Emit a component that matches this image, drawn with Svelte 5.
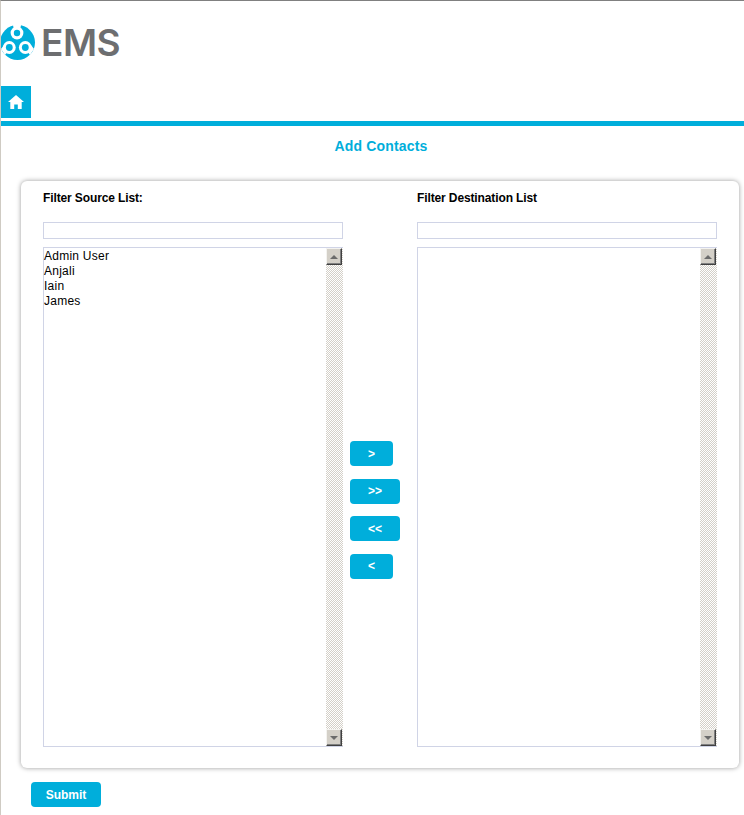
<script>
	const moveButtons = [
		{ label: '>', wide: false },
		{ label: '>>', wide: true },
		{ label: '<<', wide: true },
		{ label: '<', wide: false }
	];
	const source = ['Admin User', 'Anjali', 'Iain', 'James'];
	const lists = [
		{ title: 'Filter Source List:', items: source },
		{ title: 'Filter Destination List', items: [] }
	];
</script>

{#snippet column(list)}
	<div class="column">
		<div class="col-title">{list.title}</div>
		<input class="filter" type="text" />
		<div class="listbox">
			<div class="options">
				{#each list.items as item}
					<div>{item}</div>
				{/each}
			</div>
			<div class="scrollbar">
				<div class="arrow up"><i></i></div>
				<div class="arrow down"><i></i></div>
			</div>
		</div>
	</div>
{/snippet}

<div class="page">
	<header class="logo">
		<svg width="36" height="36" viewBox="0 0 36 36" aria-hidden="true">
			<circle cx="17.5" cy="17.5" r="17.5" fill="#00aedb" />
			<path d="M13 0 L21 0 L20 5 L14 5 Z" fill="#fff" />
			<path d="M1 24 L5 30 L8 26 L4 20 Z" fill="#fff" />
			<path d="M34 24 L30 30 L27 26 L31 20 Z" fill="#fff" />
			<circle cx="17" cy="8" r="6.4" fill="#fff" />
			<circle cx="17" cy="8" r="3.2" fill="#00aedb" />
			<circle cx="9.3" cy="22.5" r="6.4" fill="#fff" />
			<circle cx="9.3" cy="22.5" r="3.4" fill="#00aedb" />
			<circle cx="25.3" cy="22.5" r="6.4" fill="#fff" />
			<circle cx="25.3" cy="22.5" r="3.4" fill="#00aedb" />
		</svg>
		<span class="brand">EMS</span>
	</header>

	<nav class="nav">
		<a class="home" href="#home" aria-label="Home">
			<svg width="16" height="14" viewBox="0 0 16 14" aria-hidden="true">
				<path fill="#fff" d="M8 0 L16 7 L13.7 7 L13.7 14 L9.8 14 L9.8 9.5 L6.2 9.5 L6.2 14 L2.3 14 L2.3 7 L0 7 Z" />
			</svg>
		</a>
	</nav>

	<h1>Add Contacts</h1>

	<section class="card">
		{@render column(lists[0])}
		<div class="moves">
			{#each moveButtons as b}
				<button class="btn" class:wide={b.wide}>{b.label}</button>
			{/each}
		</div>
		{@render column(lists[1])}
	</section>

	<button class="btn submit">Submit</button>
</div>

<style>
	:global(body) {
		margin: 0;
		background: #fff;
		font-family: 'Liberation Sans', Arial, sans-serif;
	}

	.page {
		height: 814px;
		overflow: hidden;
		border-top: 1px solid #808080;
		border-left: 1px solid #cfcbc3;
	}

	.logo {
		display: flex;
		align-items: center;
		gap: 5px;
		height: 36px;
		margin: 24px 0 0 -1px;
	}

	.brand {
		font-family: Inter, Lato, sans-serif;
		font-weight: 600;
		font-size: 37px;
		line-height: 36px;
		letter-spacing: -0.5px;
		color: #6d6e70;
	}

	.nav {
		margin-top: 25px;
		border-bottom: 5px solid #00aedb;
		height: 35px;
	}

	.home {
		display: flex;
		align-items: center;
		justify-content: center;
		width: 30px;
		height: 32px;
		background: #00aedb;
	}

	h1 {
		margin: 12px 0 0;
		padding-left: 17px;
		text-align: center;
		font-size: 14px;
		line-height: 16px;
		font-weight: 700;
		letter-spacing: 0.15px;
		color: #00aedb;
	}

	.card {
		display: flex;
		box-sizing: border-box;
		width: 718px;
		height: 587px;
		margin: 27px 0 0 20px;
		padding: 9px 22px 0;
		background: #fff;
		border-radius: 6px;
		box-shadow: 0 0 5px rgba(0, 0, 0, 0.4);
	}

	.column {
		display: flex;
		flex-direction: column;
		width: 300px;
	}

	.col-title {
		font-size: 12px;
		line-height: 16px;
		font-weight: 700;
		letter-spacing: -0.12px;
		color: #000;
	}

	.filter {
		box-sizing: border-box;
		width: 300px;
		height: 17px;
		margin: 16px 0 8px;
		padding: 0;
		border: 1px solid #d0d4e6;
		outline: none;
	}

	.listbox {
		display: flex;
		box-sizing: border-box;
		width: 300px;
		height: 500px;
		border: 1px solid #d0d4e6;
		border-right: 0;
	}

	.options {
		flex: 1;
		font-size: 12px;
		line-height: 15px;
		letter-spacing: 0.25px;
		color: #000;
		padding-top: 1px;
	}

	.scrollbar {
		display: flex;
		flex-direction: column;
		justify-content: space-between;
		box-sizing: border-box;
		width: 17px;
		height: 100%;
		background: repeating-conic-gradient(#d4d0c8 0 25%, #fff 0 50%) 0 0 / 2px 2px;
	}

	.arrow {
		display: flex;
		align-items: center;
		justify-content: center;
		width: 16px;
		height: 17px;
		box-sizing: border-box;
		background: #d4d0c8;
		border: 1px solid;
		border-color: #f4f3f0 #404040 #404040 #f4f3f0;
		box-shadow: inset -1px -1px 0 #808080;
	}

	.arrow i {
		width: 0;
		height: 0;
		border-left: 4px solid transparent;
		border-right: 4px solid transparent;
	}

	.up i {
		border-bottom: 4px solid #6b6b6b;
	}

	.down i {
		border-top: 4px solid #6b6b6b;
	}

	.moves {
		display: flex;
		flex-direction: column;
		align-items: flex-start;
		gap: 12.5px;
		width: 74px;
		padding: 251px 0 0 7px;
		box-sizing: border-box;
	}

	.btn {
		width: 43px;
		height: 25px;
		padding: 0;
		border: 0;
		border-radius: 4px;
		background: #00aedb;
		color: #fff;
		font-family: inherit;
		font-size: 12px;
		font-weight: 700;
	}

	.btn.wide {
		width: 50px;
	}

	.submit {
		display: block;
		width: 70px;
		margin: 14px 0 0 30px;
	}
</style>
